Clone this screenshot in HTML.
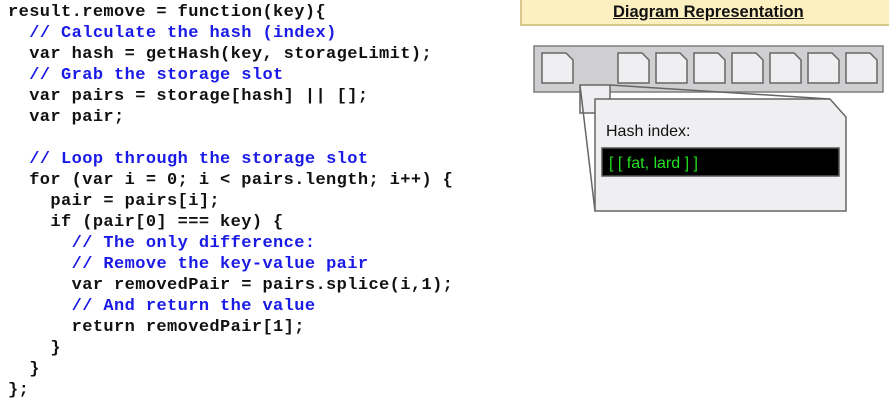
<!DOCTYPE html>
<html><head><style>
html,body{margin:0;padding:0;background:#fff;width:889px;height:420px;overflow:hidden;position:relative}
pre{position:absolute;left:8px;top:2px;margin:0;font-family:"Liberation Mono",monospace;font-weight:bold;font-size:17px;line-height:21px;color:#111;letter-spacing:0.4px}
.c{color:#1a1ae6}
.hdr{position:absolute;left:520px;top:-2px;width:380px;height:28px;background:#fcefc0;border:2px solid #d8c98a;box-sizing:border-box}
.hdr span{position:absolute;left:91px;top:3px;font-family:"Liberation Sans",sans-serif;font-weight:bold;font-size:16.5px;text-decoration:underline;color:#111}
</style></head><body>
<pre>result.remove = function(key){
  <span class="c">// Calculate the hash (index)</span>
  var hash = getHash(key, storageLimit);
  <span class="c">// Grab the storage slot</span>
  var pairs = storage[hash] || [];
  var pair;

  <span class="c">// Loop through the storage slot</span>
  for (var i = 0; i &lt; pairs.length; i++) {
    pair = pairs[i];
    if (pair[0] === key) {
      <span class="c">// The only difference:</span>
      <span class="c">// Remove the key-value pair</span>
      var removedPair = pairs.splice(i,1);
      <span class="c">// And return the value</span>
      return removedPair[1];
    }
  }
};</pre>
<div class="hdr"><span>Diagram Representation</span></div>
<svg width="889" height="420" style="position:absolute;left:0;top:0" xmlns="http://www.w3.org/2000/svg">
<rect x="534" y="46" width="349" height="46" fill="#cfcfd1" stroke="#7d7d7d" stroke-width="1.5"/>
<g fill="#efeff1" stroke="#666" stroke-width="1.5">
<path d="M542 53h24l7 7v23h-31z"/>
<path d="M618 53h24l7 7v23h-31z"/>
<path d="M656 53h24l7 7v23h-31z"/>
<path d="M694 53h24l7 7v23h-31z"/>
<path d="M732 53h24l7 7v23h-31z"/>
<path d="M770 53h24l7 7v23h-31z"/>
<path d="M808 53h24l7 7v23h-31z"/>
<path d="M846 53h24l7 7v23h-31z"/>
<path d="M580 85h30v28h-30z"/>
<path d="M580 85l15 126M610 85l220 14" fill="none"/>
<path d="M595 99h235l16 18v94h-251z"/>
</g>
<rect x="602" y="148" width="237" height="28" fill="#000" stroke="#555" stroke-width="1.5"/>
<text x="606" y="136" font-family="Liberation Sans, sans-serif" font-size="16" fill="#111">Hash index:</text>
<text x="609" y="168" font-family="Liberation Sans, sans-serif" font-size="16" fill="#22e022">[ [ fat, lard ] ]</text>
</svg>
</body></html>
